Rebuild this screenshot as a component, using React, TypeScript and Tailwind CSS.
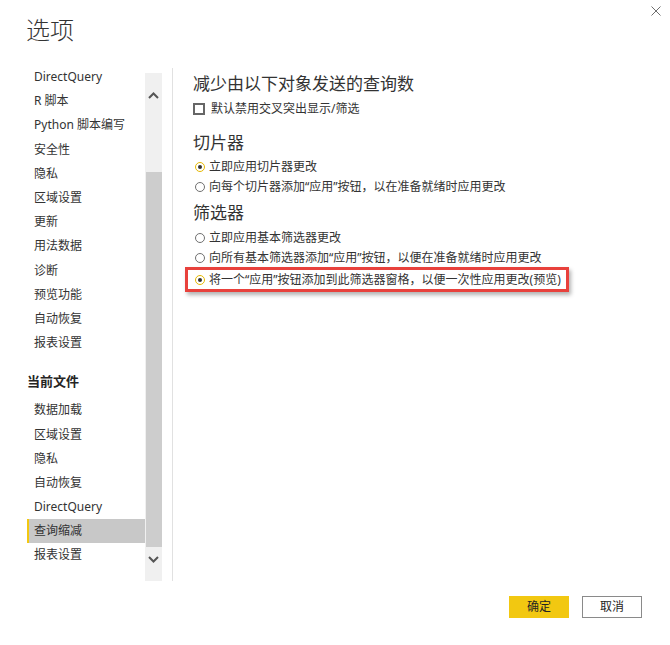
import React from "react";

const F = "font-['Segoe_UI','Noto_Sans','Noto_Sans_CJK_SC',sans-serif]";

function Radio({ checked }: { checked?: boolean }) {
  return checked ? (
    <span className="w-[10px] h-[10px] rounded-full border-[1.5px] border-[#e6b800] bg-white flex items-center justify-center shrink-0">
      <span className="w-[4px] h-[4px] rounded-full bg-[#333]" />
    </span>
  ) : (
    <span className="w-[10px] h-[10px] rounded-full border-[1.5px] border-[#707070] bg-white shrink-0" />
  );
}

function RadioRow({ checked, label }: { checked?: boolean; label: string }) {
  return (
    <div className="h-[20px] flex items-center pl-[2px] gap-[4px]">
      <Radio checked={checked} />
      <span className="text-[12px] text-[#333] whitespace-nowrap">{label}</span>
    </div>
  );
}

const group1 = [
  "DirectQuery",
  "R 脚本",
  "Python 脚本编写",
  "安全性",
  "隐私",
  "区域设置",
  "更新",
  "用法数据",
  "诊断",
  "预览功能",
  "自动恢复",
  "报表设置",
];
const group2 = ["数据加载", "区域设置", "隐私", "自动恢复", "DirectQuery", "查询缩减", "报表设置"];

export default function App() {
  return (
    <div className={`w-[670px] h-[645px] bg-white ${F} text-[#333]`}>
      {/* header */}
      <div className="h-[68px] flex items-start pl-[26px] pr-[9px] pt-[6px]">
        <div className="mt-[8px] text-[24px] leading-[32px] font-light text-[#333]">选项</div>
        <svg className="ml-auto" width="10" height="10" viewBox="0 0 10 10">
          <path d="M0.5 0.5 L9.5 9.5 M9.5 0.5 L0.5 9.5" stroke="#6e6e6e" strokeWidth="1" fill="none" />
        </svg>
      </div>

      {/* body */}
      <div className="flex items-start h-[513px]">
        {/* nav */}
        <div className="ml-[27px] mt-[2px] w-[118px] h-[511px] overflow-hidden">
          <div className="-mt-[5px]">
            {group1.map((t, i) => (
              <div key={i} className="h-[24.2px] flex items-center pl-[7px] text-[12px] whitespace-nowrap">
                {t}
              </div>
            ))}
            <div className="mt-[14px] h-[24px] flex items-center text-[13px] font-bold text-[#252423]">当前文件</div>
            <div className="mt-[5px]">
              {group2.map((t, i) =>
                t === "查询缩减" ? (
                  <div
                    key={i}
                    className="h-[24.2px] flex items-center pl-[5px] text-[12px] bg-[#c8c8c8] border-l-2 border-[#f2c811]"
                  >
                    {t}
                  </div>
                ) : (
                  <div key={i} className="h-[24.2px] flex items-center pl-[7px] text-[12px] whitespace-nowrap">
                    {t}
                  </div>
                )
              )}
            </div>
          </div>
        </div>

        {/* scrollbar */}
        <div className="mt-[5px] w-[17px] h-[508px] bg-[#f0f0f0] flex flex-col items-center">
          <div className="h-[44px] flex items-center justify-center">
            <svg width="11" height="7" viewBox="0 0 11 7">
              <path d="M1 6 L5.5 1.5 L10 6" stroke="#555" strokeWidth="2" fill="none" />
            </svg>
          </div>
          <div className="h-[55px]" />
          <div className="h-[375px] w-[16px] bg-[#cdcdcd]" />
          <div className="h-[24px] flex items-center justify-center">
            <svg width="11" height="7" viewBox="0 0 11 7">
              <path d="M1 1 L5.5 5.5 L10 1" stroke="#555" strokeWidth="2" fill="none" />
            </svg>
          </div>
        </div>

        {/* divider */}
        <div className="ml-[10px] w-px h-[513px] bg-[#e1e1e1]" />

        {/* content */}
        <div className="pl-[20px] flex flex-col">
          <div className="mt-[4px] text-[17px] leading-[24px] text-[#333]">减少由以下对象发送的查询数</div>
          <div className="mt-[3px] h-[20px] flex items-center gap-[6px]">
            <span className="w-[12px] h-[12px] border-2 border-[#666] bg-white shrink-0" />
            <span className="text-[12px]">默认禁用交叉突出显示/筛选</span>
          </div>

          <div className="mt-[12px] text-[17px] leading-[24px] text-[#333]">切片器</div>
          <div className="mt-[2px]">
            <RadioRow checked label="立即应用切片器更改" />
            <RadioRow label="向每个切片器添加“应用”按钮，以在准备就绪时应用更改" />
          </div>

          <div className="mt-[4px] text-[17px] leading-[24px] text-[#333]">筛选器</div>
          <div className="mt-[3px]">
            <RadioRow label="立即应用基本筛选器更改" />
            <RadioRow label="向所有基本筛选器添加“应用”按钮，以便在准备就绪时应用更改" />
            <div className="-mt-[1px] -ml-[8px] w-[384px] h-[25px] border-[3px] border-[#e8413c] shadow-[2px_3px_4px_rgba(0,0,0,0.3)] flex items-center pl-[7px] gap-[4px]">
              <Radio checked />
              <span className="text-[12px] text-[#333] whitespace-nowrap">
                将一个“应用”按钮添加到此筛选器窗格，以便一次性应用更改(预览)
              </span>
            </div>
          </div>
        </div>
      </div>

      {/* footer */}
      <div className="mt-[15px] flex justify-end gap-[13px] pr-[28px]">
        <button className="w-[60px] h-[22px] bg-[#f2c811] text-[12px] text-[#252423] flex items-center justify-center">
          确定
        </button>
        <button className="w-[60px] h-[22px] bg-white border border-[#8a8a8a] text-[12px] text-[#252423] flex items-center justify-center">
          取消
        </button>
      </div>
    </div>
  );
}
